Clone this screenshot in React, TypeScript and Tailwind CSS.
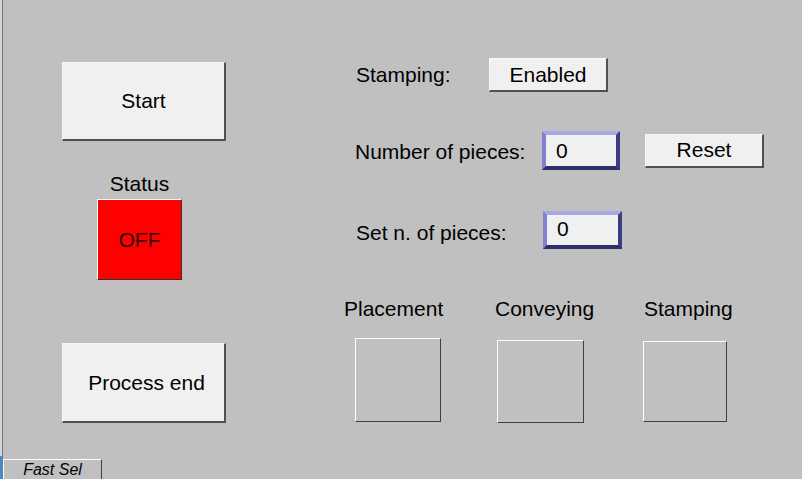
import React from "react";

const btn =
  "bg-[#f0f0f0] border-t border-l border-t-[#f8f8f8] border-l-[#f8f8f8] border-r-2 border-b-2 border-r-[#505050] border-b-[#505050] flex items-center justify-center text-black";

const inp =
  "bg-[#f0f0f0] border-[4px] border-t-[#a8a8e6] border-l-[#8080d0] border-b-[#2e2e6c] border-r-[#3c3c80] flex items-center pl-[10px] text-black";

const box =
  "bg-[#c0c0c0] border-t border-l border-t-white border-l-white border-b border-r border-b-[#404040] border-r-[#404040]";

export default function App() {
  return (
    <div
      className="relative w-[802px] h-[479px] bg-[#c0c0c0] overflow-hidden flex flex-col text-[21px] leading-[24px] text-black"
      style={{ fontFamily: '"Liberation Sans", Arial, sans-serif' }}
    >
      <div className="absolute left-0 top-0 h-full w-[2px] bg-[#d2d6da]" />
      <div className="absolute left-[2px] top-0 h-full w-px bg-[#787878]" />
      <div className="absolute left-0 top-[456px] h-[23px] w-[2px] bg-[#3a8fd8]" />

      <div className="flex flex-row">
        {/* Left column */}
        <div className="flex flex-col ml-[62px] pt-[62px] w-[164px]">
          <div className={`${btn} h-[79px] w-[164px]`}>Start</div>
          <div className="mt-[31px] ml-[35px] w-[85px] flex flex-col items-center">
            <div className="h-[24px]">Status</div>
            <div className="mt-[3px] w-[85px] h-[81px] bg-[#ff0000] border-t border-l border-t-white border-l-white border-b border-r border-b-[#303030] border-r-[#303030] flex items-center justify-center text-[#2a0000]">
              OFF
            </div>
          </div>
          <div className={`${btn} mt-[63px] h-[80px] w-[164px] pl-[6px]`}>Process end</div>
        </div>

        {/* Right column */}
        <div className="flex flex-col ml-[118px] pt-[58px]">
          <div className="flex flex-row items-center h-[34px]">
            <div className="ml-[12px] w-[133px]">Stamping:</div>
            <div className={`${btn} w-[119px] h-[34px]`}>Enabled</div>
          </div>

          <div className="flex flex-row items-center h-[39px] mt-[39px]">
            <div className="ml-[11px] w-[187px] pt-[3px]">Number of pieces:</div>
            <div className={`${inp} w-[78px] h-[39px]`}>0</div>
            <div className={`${btn} ml-[25px] w-[119px] h-[34px]`}>Reset</div>
          </div>

          <div className="flex flex-row items-center h-[38px] mt-[41px]">
            <div className="ml-[12px] w-[187px] pt-[6px]">Set n. of pieces:</div>
            <div className={`${inp} w-[79px] h-[38px] pb-[3px]`}>0</div>
          </div>

          <div className="flex flex-row mt-[48px]">
            <div className="flex flex-col w-[151px]">
              <div className="h-[24px]">Placement</div>
              <div className={`${box} ml-[11px] mt-[17px] w-[86px] h-[84px]`} />
            </div>
            <div className="flex flex-col w-[148px]">
              <div className="h-[24px]">Conveying</div>
              <div className={`${box} ml-[2px] mt-[19px] w-[87px] h-[83px]`} />
            </div>
            <div className="flex flex-col">
              <div className="h-[24px] ml-[1px]">Stamping</div>
              <div className={`${box} mt-[20px] w-[84px] h-[81px]`} />
            </div>
          </div>
        </div>
      </div>

      <div className="mt-auto ml-[3px] w-[99px] h-[20px] bg-[#c0c0c0] border-t border-l border-t-white border-l-white border-r border-r-[#404040] flex items-center justify-center italic text-[16px] leading-none">
        Fast Sel
      </div>
    </div>
  );
}
